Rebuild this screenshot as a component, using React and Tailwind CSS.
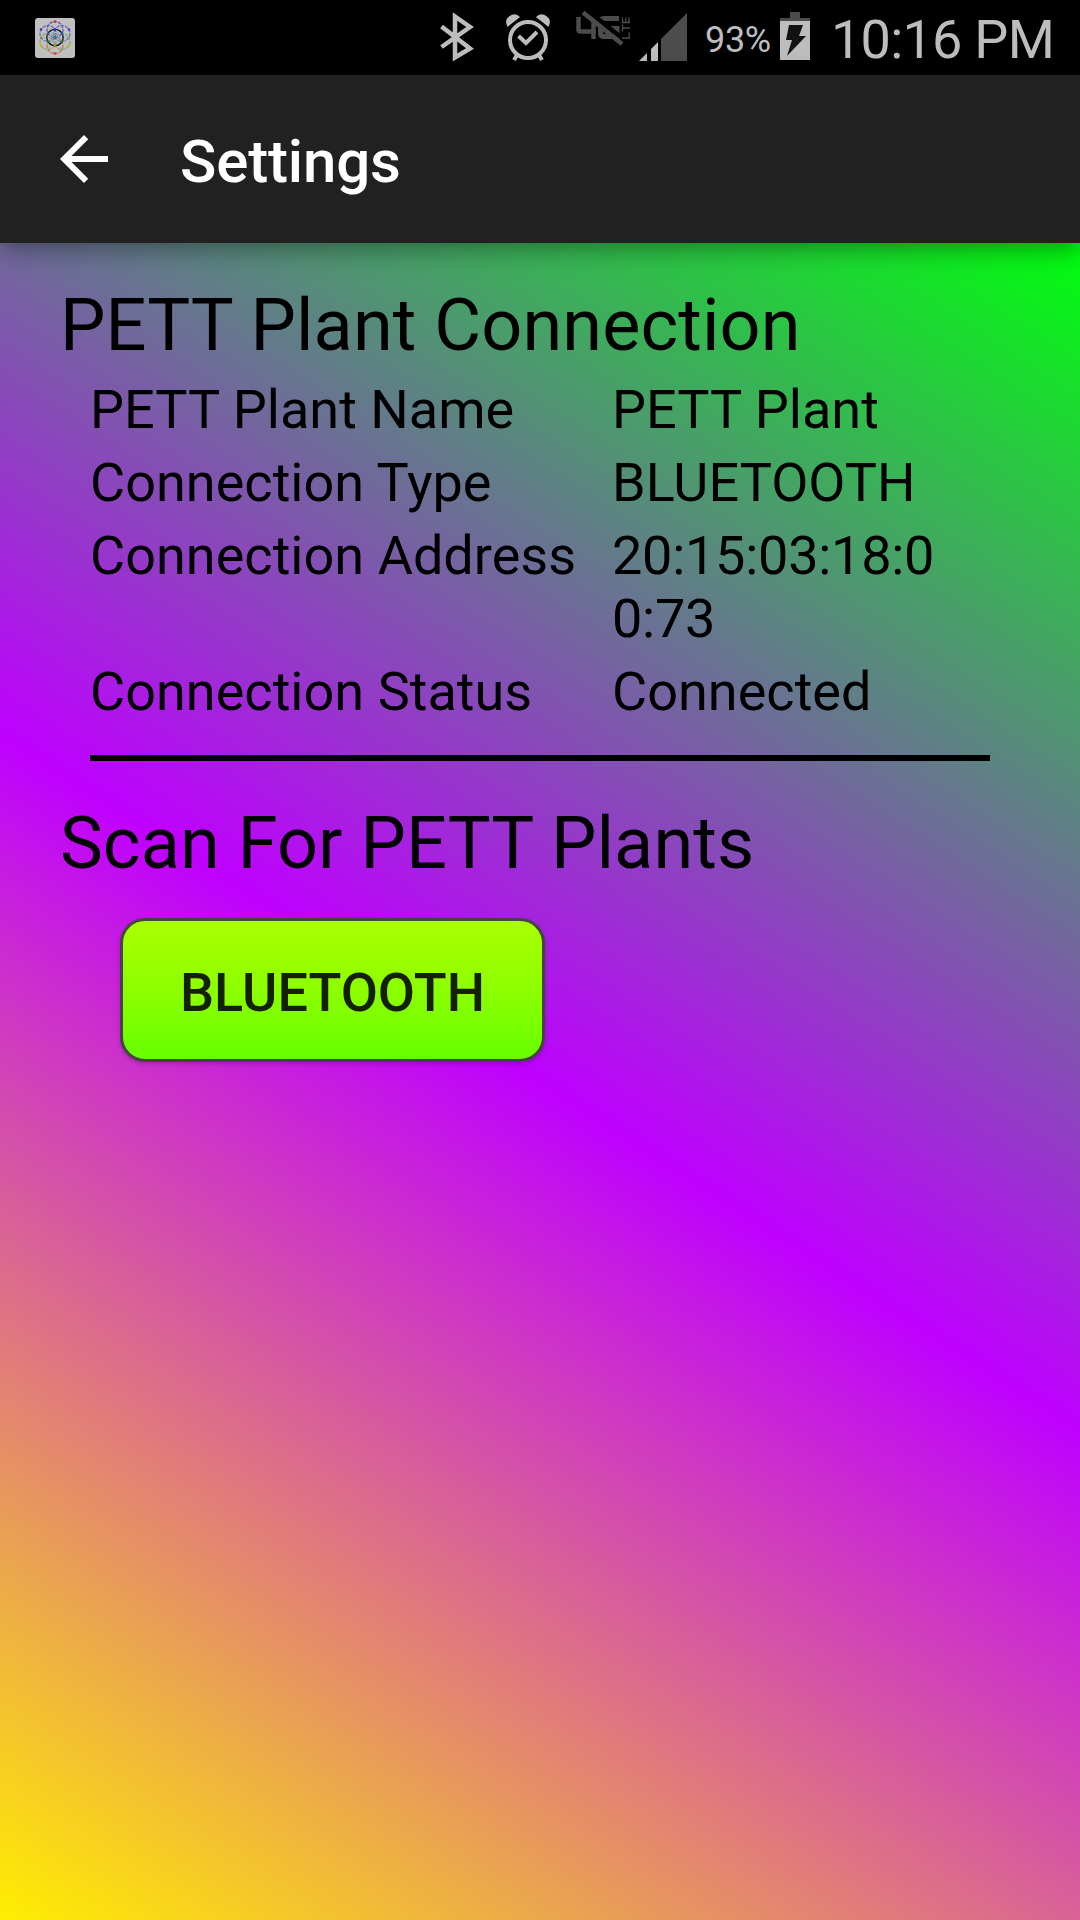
const SANS = "font-['Roboto',sans-serif]";

function FlowerIcon() {
  const ring = [
    [0, -8, '#3d2fae'],
    [7, -4, '#5a4ac8'],
    [7, 4, '#6f984a'],
    [0, 8, '#c05030'],
    [-7, 4, '#889838'],
    [-7, -4, '#5a4ab8'],
  ];
  return (
    <svg className="ml-[35px] mt-[18px] h-10 w-10 shrink-0" viewBox="0 0 40 40" fill="none">
      <rect width="40" height="40" rx="3" fill="#c0c0c0" />
      {ring.map(([dx, dy, c]) => (
        <circle key={c} cx={20 + dx} cy={19.5 + dy} r="8" stroke={c} strokeWidth="1.2" strokeDasharray="3.5 1" opacity="0.75" />
      ))}
      <path d="M6 19.5h28M13 8l14 23M27 8L13 31" stroke="#4a90a8" strokeWidth="0.8" strokeDasharray="2 1.5" opacity="0.6" />
      <circle cx="20" cy="19.5" r="8.2" stroke="#000" strokeWidth="1.2" />
      <g>
        <circle cx="20" cy="3.5" r="1.3" fill="#d02040" />
        <circle cx="34" cy="11.5" r="1.3" fill="#4a30d0" />
        <circle cx="6" cy="11.5" r="1.3" fill="#4a30d0" />
        <circle cx="20" cy="11.5" r="1.2" fill="#2020e0" />
        <circle cx="34" cy="27.5" r="1.2" fill="#c8b820" />
        <circle cx="6" cy="27.5" r="1.2" fill="#c8b820" />
        <circle cx="20" cy="27.5" r="1.2" fill="#909020" />
        <circle cx="27" cy="23.5" r="1.2" fill="#109020" />
        <circle cx="13" cy="23.5" r="1.2" fill="#109020" />
        <circle cx="27" cy="15.5" r="1.2" fill="#3060c0" />
        <circle cx="13" cy="15.5" r="1.2" fill="#3060c0" />
        <circle cx="20" cy="19.5" r="1.5" fill="#1080a0" />
        <circle cx="20" cy="35.5" r="1.3" fill="#d04020" />
      </g>
    </svg>
  );
}

function StatusIcons() {
  return (
    <svg className="ml-auto h-[75px] w-[280px] shrink-0" viewBox="0 0 280 75" fill="none">
      {/* bluetooth */}
      <path d="M21.5 26.5L50 48.5L35 57.5V16.5L50 27L21.5 47" stroke="#bdbdbd" strokeWidth="4.5" />
      {/* alarm clock */}
      <circle cx="108" cy="40" r="18" stroke="#bdbdbd" strokeWidth="4" />
      <path d="M98.5 36L106 43L117 32" stroke="#bdbdbd" strokeWidth="4" />
      <path d="M97 55l-3 5M119 55l3 5" stroke="#bdbdbd" strokeWidth="4" />
      <path d="M87.5 27Q84 20 89 16.500Q95 12 100 17ZM128.500 27Q132 20 127 16.500Q121 12 116 17Z" fill="#bdbdbd" />
      {/* 4G with a strike */}
      <path d="M158.5 17V29.5Q158.5 31.500 161 31.500H172M173.500 17V39" stroke="#4c4c4c" strokeWidth="4.500" />
      <path d="M199 18.500H184Q180.500 18.500 180.500 22V33Q180.500 36.500 184 36.500H197V28.500H188" stroke="#4c4c4c" strokeWidth="5" />
      <path d="M166 9.500L207 42" stroke="#000" strokeWidth="4.500" />
      <path d="M163 12.500L202 44" stroke="#4c4c4c" strokeWidth="4.500" />
      <path d="M202.500 17.500V22.500M209 17.500V22.500M205.700 17.500V22M202 22.500H210M202.500 24.500V31.500M202 28H210M202 38H209.200V32.500" stroke="#4c4c4c" strokeWidth="1.300" />
      {/* signal strength */}
      <path d="M219 61L227 53V61ZM231 61V49L238 42V61Z" fill="#bdbdbd" />
      <path d="M241 61V39L267 13V61Z" fill="#4c4c4c" />
    </svg>
  );
}

function StatusBar() {
  return (
    <div className="flex h-[75px] w-full bg-black text-[#bdbdbd]">
      <FlowerIcon />
      <StatusIcons />
      <div className="ml-[5px] mt-[19px] w-[75px] text-[36px] leading-[42px] tracking-[-0.3px]">93%</div>
      <svg className="h-[75px] w-[30px] shrink-0" viewBox="0 0 30 75">
        <path d="M10 12h10v6h10v3H0v-3h10z" fill="#4c4c4c" />
        <path d="M0 21h30v39H0z" fill="#bdbdbd" />
        <path d="M9 25h14l-4 11h7L7 56l5-16H6z" fill="#111" />
      </svg>
      <div className="ml-[21px] mt-[8px] w-[249px] whitespace-nowrap text-[54px] leading-[64px] tracking-[-0.75px]">10:16 PM</div>
    </div>
  );
}

function AppBar() {
  return (
    <header className="relative z-10 flex h-[168px] w-full items-start bg-[#212121] text-white shadow-[0_6px_24px_rgba(0,0,0,0.38)]">
      <svg className="ml-12 mt-12 h-[72px] w-[72px] shrink-0" viewBox="0 0 24 24" fill="white">
        <path d="M20 11H7.830l5.590-5.590L12 4l-8 8 8 8 1.410-1.410L7.830 13H20v-2z" />
      </svg>
      <h1 className="ml-[60px] mt-[52px] text-[60px] font-medium leading-[70px] tracking-[-0.15px]">Settings</h1>
    </header>
  );
}

const DETAILS = [
  ['PETT Plant Name', 'PETT Plant'],
  ['Connection Type', 'BLUETOOTH'],
  ['Connection Address', '20:15:03:18:00:73', 'tracking-[-0.25px]'],
  ['Connection Status', 'Connected'],
];

export default function App() {
  return (
    <div className={`flex h-[1920px] w-[1080px] flex-col overflow-hidden ${SANS}`}>
      <StatusBar />
      <AppBar />
      <main className="flex flex-1 flex-col items-start bg-[linear-gradient(32.78deg,#ffee00,#bf00ff_50%,#00ff0d)] px-[60px] text-black">
        <h2 className="mt-[41px] text-[72px] leading-[84px] tracking-[0.1px]">PETT Plant Connection</h2>
        <dl className="ml-[30px] mt-[10px] flex flex-col gap-[10px] text-[54px] leading-[63px]">
          {DETAILS.map(([label, value, spacing = 'tracking-[0.03px]']) => (
            <div key={label} className="flex">
              <dt className="w-[522px] tracking-[0.03px]">{label}</dt>
              <dd className={`w-[348px] break-all ${spacing}`}>{value}</dd>
            </div>
          ))}
        </dl>
        <hr className="ml-[30px] mt-[32px] h-[6px] w-[900px] border-0 bg-black" />
        <h2 className="mt-[41px] text-[72px] leading-[84px] tracking-[0.1px]">Scan For PETT Plants</h2>
        <button className="ml-[60px] mt-[32px] h-[144px] w-[425px] rounded-[25px] border-[3px] border-[#444] bg-linear-to-b from-[#aaff00] to-[#66ff00] pt-[5px] text-[54px] font-medium leading-[63px] text-[#152000] shadow-[0_2px_4px_rgba(0,0,0,0.2)]">
          BLUETOOTH
        </button>
      </main>
    </div>
  );
}
